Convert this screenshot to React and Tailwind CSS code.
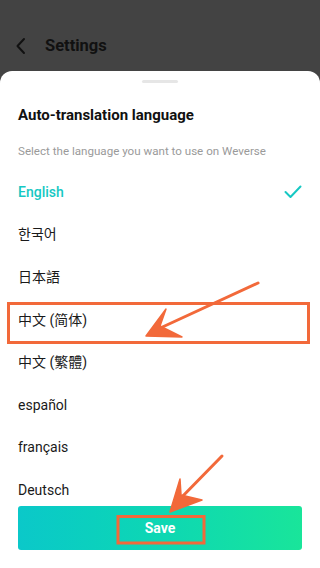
import React from "react";

const langs = ["English", "한국어", "日本語", "中文 (简体)", "中文 (繁體)", "español", "français", "Deutsch"];

export default function App() {
  return (
    <div
      className="relative w-[320px] h-[568px] overflow-hidden bg-[#434343] flex flex-col"
      style={{ fontFamily: 'Roboto, "Noto Sans CJK SC", "Noto Sans CJK KR", "Noto Sans CJK JP", sans-serif' }}
    >
      <div className="h-[71px] shrink-0 flex items-center pl-[15px] pt-[21px]">
        <svg width="12" height="18" viewBox="0 0 12 18" className="mr-[18px]">
          <path d="M9 2 L2.5 9 L9 16" fill="none" stroke="#111" strokeWidth="2" strokeLinecap="round" strokeLinejoin="round" />
        </svg>
        <span className="text-[16.5px] font-bold text-[#111]">Settings</span>
      </div>
      <div className="flex-1 bg-white rounded-t-[12px] flex flex-col pt-[9px]">
        <div className="h-[3px] w-9 mx-auto rounded-full bg-[#e6e6e6]" />
        <div className="mt-[20px] px-[18px] text-[15px] leading-[24px] font-bold text-[#111]">Auto-translation language</div>
        <div className="mt-[16px] px-[18px] text-[11.6px] leading-4 text-[#9a9a9a]">Select the language you want to use on Weverse</div>
        <div className="mt-3 h-[335px] overflow-hidden">
          {langs.map((l, i) => (
            <div key={l} className="h-[42.6px] flex items-center justify-between px-[18px]">
              <span className={i === 0 ? "text-[14px] font-medium text-[#16c8c3]" : "text-[14px] text-[#1a1a1a]"}>{l}</span>
              {i === 0 && (
                <svg width="18" height="14" viewBox="0 0 18 14">
                  <path d="M1.5 7 L6.5 12 L16.5 1.5" fill="none" stroke="#16c8c3" strokeWidth="2" strokeLinecap="round" strokeLinejoin="round" />
                </svg>
              )}
            </div>
          ))}
        </div>
        <div className="px-[18px]">
          <div className="h-[44px] rounded-[3px] bg-gradient-to-r from-[#0bc8c9] to-[#19e59a] flex items-center justify-center">
            <span className="text-white text-[14px] font-bold">Save</span>
          </div>
        </div>
      </div>
      <svg className="absolute inset-0 pointer-events-none" width="320" height="568" viewBox="0 0 320 568">
        <rect x="8.5" y="303.5" width="300" height="39" fill="none" stroke="#f2693a" strokeWidth="3" />
        <path d="M258 283 L156 330" stroke="#f2693a" strokeWidth="3" strokeLinecap="round" />
        <path d="M146 336 L166 309 L160 326 L182 337 Z" fill="#f2693a" stroke="#f2693a" strokeWidth="1.5" strokeLinejoin="round" />
        <rect x="118" y="516.5" width="86" height="26.5" fill="none" stroke="#f2693a" strokeWidth="3" />
        <path d="M222 456 L177 502" stroke="#f2693a" strokeWidth="3" strokeLinecap="round" />
        <path d="M170 512 L180 479 L181 495 L202 500 Z" fill="#f2693a" stroke="#f2693a" strokeWidth="1.5" strokeLinejoin="round" />
      </svg>
    </div>
  );
}
